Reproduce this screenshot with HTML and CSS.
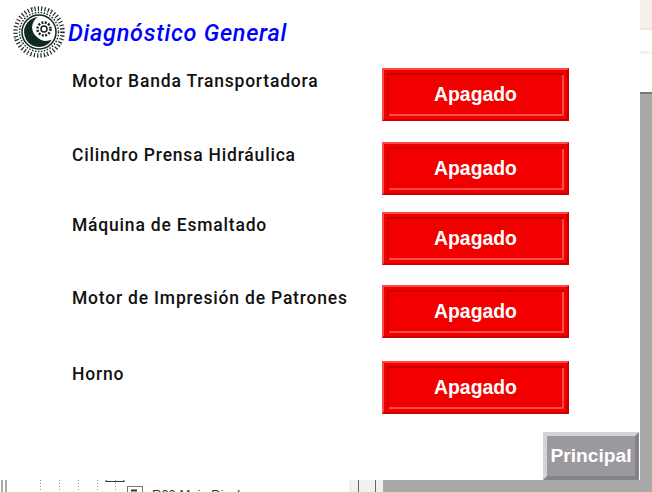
FILE: index.html
```html
<!DOCTYPE html>
<html lang="en">
<head>
    <meta charset="UTF-8">
    <title>Diagnóstico General</title>
    <link rel="stylesheet" href="styles.css">
</head>
<body>
    <div class="screen">
        <div class="panel">
            <div class="header">
                <svg class="logo" width="54" height="54" viewBox="0 0 54 54">
                    <!-- outer rays -->
                    <circle cx="27" cy="27" r="23.500" fill="none" stroke="#1a2a24" stroke-width="4.500" stroke-dasharray="1.200 2.200"/>
                    <circle cx="27" cy="27" r="19.500" fill="#fff" stroke="#1a2a24" stroke-width="1.500" stroke-dasharray="1.500 1.500"/>
                    <circle cx="27" cy="27" r="25" fill="none" stroke="#c09a60" stroke-width="2" stroke-dasharray="1.500 18.100" stroke-dashoffset="8"/>
                    <circle cx="27" cy="27" r="17" fill="#fff" stroke="#12261f" stroke-width="1.500"/>
                    <!-- moon -->
                    <path d="M26 12a15 15 0 1 0 14 22.500a13.500 13.500 0 0 1-15-2.500a12 12 0 0 1 1-20z" fill="#0f2a20"/>
                    <!-- gear -->
                    <circle cx="32" cy="24" r="6.500" fill="none" stroke="#12261f" stroke-width="2.500" stroke-dasharray="2 1.400"/>
                    <circle cx="32" cy="24" r="3" fill="none" stroke="#12261f" stroke-width="1.500"/>
                </svg>
                <h1 class="title">Diagnóstico General</h1>
            </div>
            <div class="rows">
                <div class="label">Motor Banda Transportadora</div>
                <div class="btn">Apagado</div>
                <div class="label">Cilindro Prensa Hidráulica</div>
                <div class="btn">Apagado</div>
                <div class="label">Máquina de Esmaltado</div>
                <div class="btn">Apagado</div>
                <div class="label">Motor de Impresión de Patrones</div>
                <div class="btn">Apagado</div>
                <div class="label">Horno</div>
                <div class="btn">Apagado</div>
            </div>
            <div class="footer">
                <div class="nav-btn">Principal</div>
            </div>
        </div>
        <div class="side">
            <div class="side-top"></div>
            <div class="side-line"></div>
            <div class="side-gray"></div>
        </div>
    </div>
    <div class="strip">
        <div class="tree">
            <svg class="tree-lines" width="150" height="12" viewBox="0 0 150 12">
                <path d="M2 0v12M6 0v12" stroke="#aaa" stroke-width="2" fill="none"/>
                <path d="M40.500 0v12M59.500 0v12M78.500 0v12M97.500 0v12M115.500 0v12" stroke="#999" stroke-dasharray="1 2" fill="none"/>
                <path d="M106 1.500h18M106 0v2M124 0v2" stroke="#333" fill="none"/>
                <rect x="127.500" y="6.500" width="15" height="8" fill="#fff" stroke="#777"/>
                <path d="M131 10.500h6" stroke="#333" stroke-width="2"/>
            </svg>
            <span class="tree-text">R00 Main Display</span>
        </div>
        <div class="strip-mid">
            <span class="mid-bar"></span>
            <span class="mid-bar"></span>
        </div>
        <div class="strip-gray"></div>
    </div>
</body>
</html>
```
FILE: styles.css
```css
html, body { margin: 0; padding: 0; }
body {
    width: 652px;
    height: 492px;
    overflow: hidden;
    background: #fff;
    font-family: "Roboto", "Liberation Sans", sans-serif;
}
.screen { display: flex; height: 480px; }
.panel {
    width: 640px;
    display: flex;
    flex-direction: column;
    background: #fff;
}
.header {
    display: flex;
    height: 68px;
    padding: 5px 0 0 12px;
    box-sizing: border-box;
}
.title {
    margin: 13px 0 0 2px;
    font-size: 23.5px;
    line-height: 30px;
    font-weight: 500;
    font-style: italic;
    letter-spacing: 0.7px;
    color: #0000ff;
}
.rows {
    display: grid;
    grid-template-columns: 310px 187px;
    padding-left: 72px;
}
.rows .btn:nth-child(2) { margin-bottom: 21px; }
.rows .btn:nth-child(4) { margin-bottom: 17px; }
.rows .btn:nth-child(6) { margin-bottom: 20px; }
.rows .btn:nth-child(8) { margin-bottom: 23px; }
.label {
    font-size: 17.5px;
    font-weight: 500;
    letter-spacing: 0.8px;
    line-height: 26px;
    color: #111;
}
.btn {
    height: 53px;
    box-sizing: border-box;
    display: flex;
    align-items: center;
    justify-content: center;
    background: #f20000;
    border: 2px solid;
    border-color: #ff4a4a #c80000 #c80000 #ff4a4a;
    box-shadow: inset 0 0 0 3px #f20000, inset 2px 2px 0 3px #c80000, inset -2px -2px 0 3px #ff4a4a;
    color: #fff;
    font-family: "Liberation Sans", Arial, sans-serif;
    font-size: 19.4px;
    font-weight: bold;
}
.footer {
    display: flex;
    justify-content: flex-end;
    margin-top: auto;
    padding-right: 1px;
}
.nav-btn {
    width: 96px;
    height: 48px;
    box-sizing: border-box;
    display: flex;
    align-items: center;
    justify-content: center;
    background: #9b989e;
    border: 4px solid;
    border-color: #d4d4d4 #85838a #85838a #d4d4d4;
    color: #fff;
    font-family: "Liberation Sans", Arial, sans-serif;
    font-size: 19.2px;
    font-weight: bold;
}
.side { width: 12px; display: flex; flex-direction: column; }
.side-top { height: 28px; background: #f8eeea; border-bottom: 2px solid #ece4e0; }
.side-line { height: 3px; margin-top: 21px; background: #f2f2f2; margin-bottom: 38px; }
.side-gray { flex: 1; background: #a9a9a9; border-top: 2px solid #777; }
.strip { display: flex; height: 12px; }
.tree { width: 349px; position: relative; overflow: hidden; background: #fff; }
.tree-lines { display: block; }
.tree-text {
    position: absolute;
    left: 152px;
    top: 7px;
    font-family: "Liberation Sans", Arial, sans-serif;
    font-size: 13px;
    color: #333;
}
.strip-mid {
    width: 34px;
    display: flex;
    gap: 16px;
    padding-left: 9px;
    box-sizing: border-box;
    background: #f0f0f0;
}
.mid-bar { width: 1px; background: #666; }
.strip-gray { flex: 1; background: #a9a9a9; }
```
